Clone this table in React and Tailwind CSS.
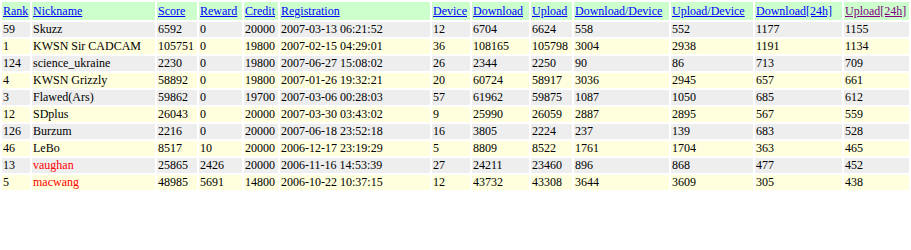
import React from "react";

const columns = [
  { label: "Rank", w: "w-[28px]" },
  { label: "Nickname", w: "w-[123px]" },
  { label: "Score", w: "w-[40px]" },
  { label: "Reward", w: "w-[43px]" },
  { label: "Credit", w: "w-[34px]" },
  { label: "Registration", w: "w-[150px]" },
  { label: "Device", w: "w-[38px]" },
  { label: "Download", w: "w-[57px]" },
  { label: "Upload", w: "w-[41px]" },
  { label: "Download/Device", w: "w-[95px]" },
  { label: "Upload/Device", w: "w-[82px]" },
  { label: "Download[24h]", w: "w-[87px]" },
  { label: "Upload[24h]", w: "w-[65px]", visited: true },
];

// red = nickname shown in red
const rows = [
  ["59", "Skuzz", "6592", "0", "20000", "2007-03-13 06:21:52", "12", "6704", "6624", "558", "552", "1177", "1155"],
  ["1", "KWSN Sir CADCAM", "105751", "0", "19800", "2007-02-15 04:29:01", "36", "108165", "105798", "3004", "2938", "1191", "1134"],
  ["124", "science_ukraine", "2230", "0", "19800", "2007-06-27 15:08:02", "26", "2344", "2250", "90", "86", "713", "709"],
  ["4", "KWSN Grizzly", "58892", "0", "19800", "2007-01-26 19:32:21", "20", "60724", "58917", "3036", "2945", "657", "661"],
  ["3", "Flawed(Ars)", "59862", "0", "19700", "2007-03-06 00:28:03", "57", "61962", "59875", "1087", "1050", "685", "612"],
  ["12", "SDplus", "26043", "0", "20000", "2007-03-30 03:43:02", "9", "25990", "26059", "2887", "2895", "567", "559"],
  ["126", "Burzum", "2216", "0", "20000", "2007-06-18 23:52:18", "16", "3805", "2224", "237", "139", "683", "528"],
  ["46", "LeBo", "8517", "10", "20000", "2006-12-17 23:19:29", "5", "8809", "8522", "1761", "1704", "363", "465"],
  ["13", "vaughan", "25865", "2426", "20000", "2006-11-16 14:53:39", "27", "24211", "23460", "896", "868", "477", "452", true],
  ["5", "macwang", "48985", "5691", "14800", "2006-10-22 10:37:15", "12", "43732", "43308", "3644", "3609", "305", "438", true],
];

export default function App() {
  return (
    <div className="bg-white min-h-[250px] w-[911px] text-black font-['Liberation_Serif','Times_New_Roman',serif] text-[12px]">
      <table className="w-[911px] table-fixed border-separate border-spacing-[2px]">
        <thead>
          <tr className="h-[18px]">
            {columns.map((c) => (
              <th
                key={c.label}
                className={`${c.w} bg-[#ccffcc] px-[1px] py-0 text-left font-normal leading-[18px] whitespace-nowrap`}
              >
                <a
                  href="#"
                  className={`underline ${c.visited ? "text-[#800080]" : "text-[#0000ff]"}`}
                >
                  {c.label}
                </a>
              </th>
            ))}
          </tr>
        </thead>
        <tbody>
          {rows.map((r, i) => {
            const red = r[13] === true;
            const cells = r.slice(0, 13);
            return (
              <tr key={i} className={`h-[15px] ${i % 2 === 0 ? "bg-[#eeeeee]" : "bg-[#ffffdd]"}`}>
                {cells.map((v, j) => (
                  <td
                    key={j}
                    className={`px-[1px] py-0 leading-[15px] whitespace-nowrap ${
                      j === 1 && red ? "text-[#ff0000]" : ""
                    }`}
                  >
                    {v}
                  </td>
                ))}
              </tr>
            );
          })}
        </tbody>
      </table>
    </div>
  );
}
